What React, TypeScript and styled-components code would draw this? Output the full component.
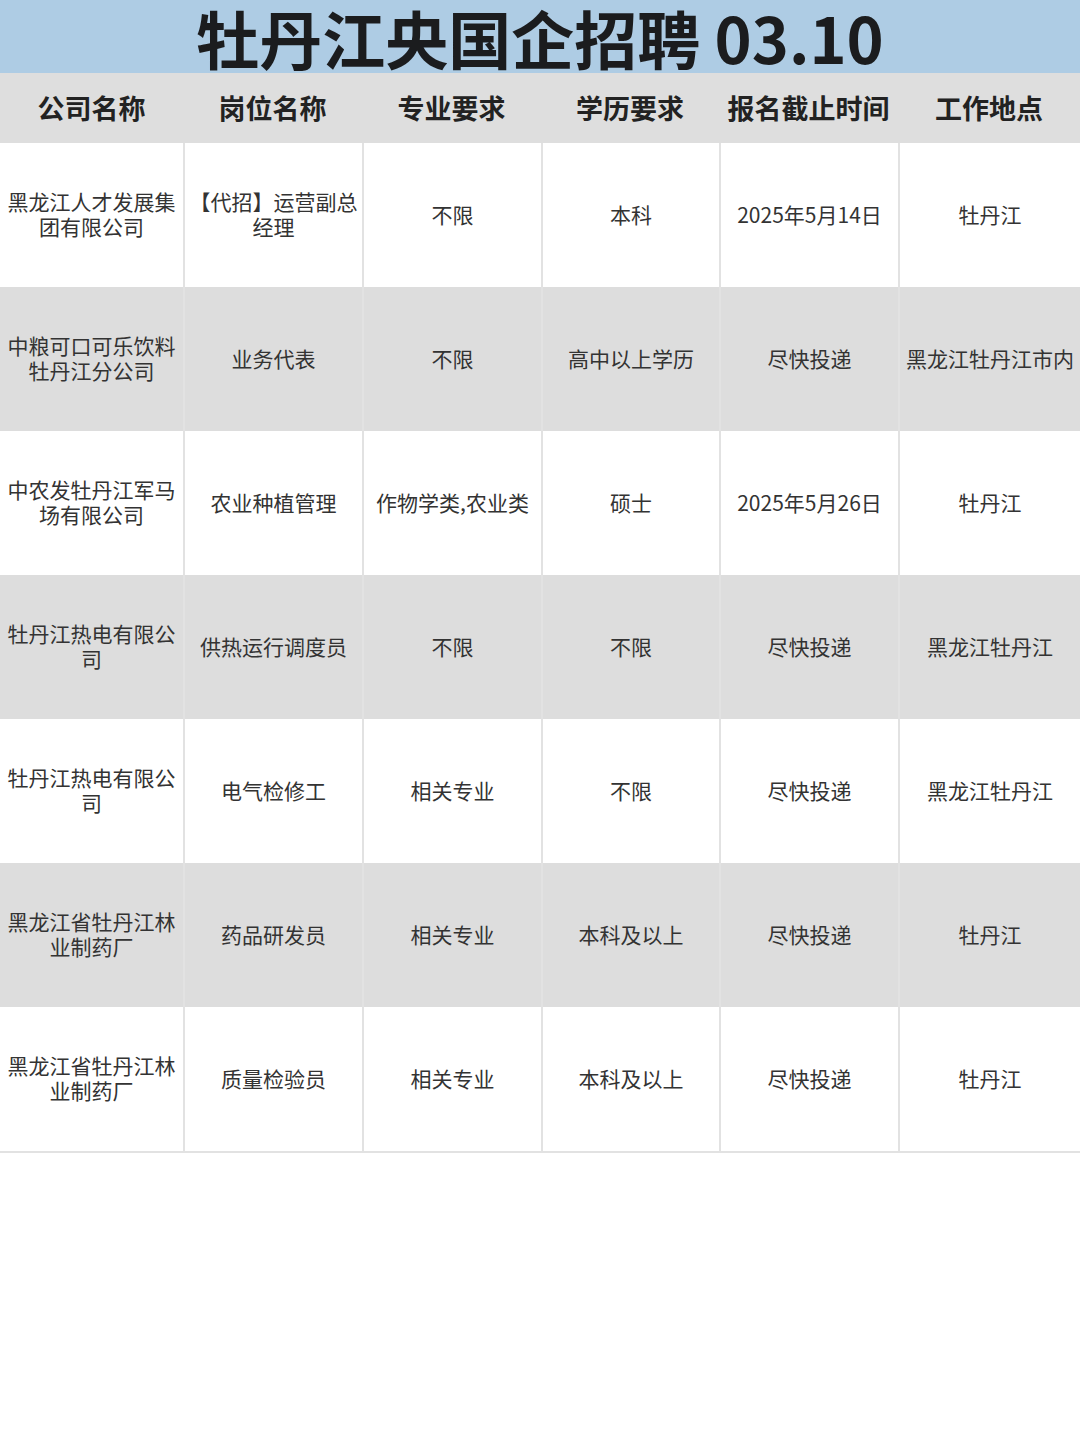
import React from "react";
import styled, { createGlobalStyle } from "styled-components";

const Global = createGlobalStyle`
  html, body { margin: 0; padding: 0; background: #fff; }
  body { font-family: "Noto Sans CJK SC", "Noto Sans", sans-serif; }
`;

const Page = styled.div`
  width: 1080px;
  min-height: 1443px;
  background: #fff;
`;

const TitleBar = styled.div`
  height: 73px;
  background: #aecce4;
  display: flex;
  align-items: center;
  justify-content: center;
`;

const Title = styled.h1`
  margin: 0;
  font-size: 63px;
  font-weight: 700;
  color: #1b1c1e;
  line-height: 73px;
  letter-spacing: 0;
`;

const Table = styled.div`
  display: flex;
  flex-direction: column;
  border-bottom: 2px solid #e2e2e2;
`;

const cols = "183px 179px 179px 178px 179px 1fr";

const HeaderRow = styled.div`
  display: grid;
  grid-template-columns: ${cols};
  height: 70px;
  background: #dedede;
`;

const HeadCell = styled.div`
  display: flex;
  align-items: center;
  justify-content: center;
  font-size: 27px;
  font-weight: 700;
  color: #222;
  padding-bottom: 2px;
`;

const Row = styled.div<{ $shade: boolean }>`
  display: grid;
  grid-template-columns: ${cols};
  height: 144px;
  background: ${(p) => (p.$shade ? "#dddddd" : "#ffffff")};
`;

const Cell = styled.div<{ $first?: boolean }>`
  display: flex;
  align-items: center;
  justify-content: center;
  text-align: center;
  padding: 0 4px 2px;
  font-size: 21px;
  line-height: 25px;
  color: #333;
  border-left: ${(p) => (p.$first ? "none" : "2px solid #e2e2e2")};
`;

const headers = ["公司名称", "岗位名称", "专业要求", "学历要求", "报名截止时间", "工作地点"];

const rows: string[][] = [
  ["黑龙江人才发展集团有限公司", "【代招】运营副总经理", "不限", "本科", "2025年5月14日", "牡丹江"],
  ["中粮可口可乐饮料牡丹江分公司", "业务代表", "不限", "高中以上学历", "尽快投递", "黑龙江牡丹江市内"],
  ["中农发牡丹江军马场有限公司", "农业种植管理", "作物学类,农业类", "硕士", "2025年5月26日", "牡丹江"],
  ["牡丹江热电有限公司", "供热运行调度员", "不限", "不限", "尽快投递", "黑龙江牡丹江"],
  ["牡丹江热电有限公司", "电气检修工", "相关专业", "不限", "尽快投递", "黑龙江牡丹江"],
  ["黑龙江省牡丹江林业制药厂", "药品研发员", "相关专业", "本科及以上", "尽快投递", "牡丹江"],
  ["黑龙江省牡丹江林业制药厂", "质量检验员", "相关专业", "本科及以上", "尽快投递", "牡丹江"],
];

export default function App() {
  return (
    <Page>
      <Global />
      <TitleBar>
        <Title>牡丹江央国企招聘 03.10</Title>
      </TitleBar>
      <Table>
        <HeaderRow>
          {headers.map((h) => (
            <HeadCell key={h}>{h}</HeadCell>
          ))}
        </HeaderRow>
        {rows.map((r, i) => (
          <Row key={i} $shade={i % 2 === 1}>
            {r.map((c, j) => (
              <Cell key={j} $first={j === 0}>
                {c}
              </Cell>
            ))}
          </Row>
        ))}
      </Table>
    </Page>
  );
}
